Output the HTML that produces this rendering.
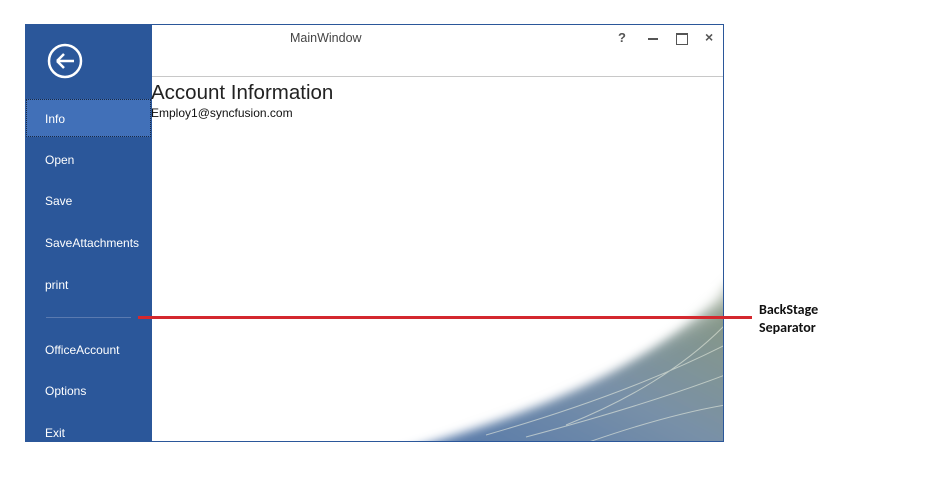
<!DOCTYPE html>
<html><head><style>
body{margin:0;width:937px;height:486px;background:#fff;position:relative;overflow:hidden;font-family:"Segoe UI","Liberation Sans",sans-serif;}
.win{position:absolute;left:25px;top:24px;width:699px;height:418px;border:1px solid #2b579a;box-sizing:border-box;background:#fff;overflow:hidden}
.side{position:absolute;left:0;top:0;width:126px;height:418px;background:#2b579a;color:#fff;font-size:12px}
.item{position:absolute;left:19px}
.info{position:absolute;left:0;top:74px;width:125px;height:38px;background:#4170b8;border:1px dotted #1a2a44;box-sizing:border-box}
</style></head><body>
<div class="win">
<svg style="position:absolute;left:0;top:0" width="699" height="418">
<defs><linearGradient id="g" x1="0" y1="1" x2="1" y2="0"><stop offset="0" stop-color="#4f74aa"/><stop offset="0.5" stop-color="#7890a8"/><stop offset="1" stop-color="#8c9a7c"/></linearGradient>
<filter id="b"><feGaussianBlur stdDeviation="5"/></filter><filter id="b2"><feGaussianBlur stdDeviation="10"/></filter></defs>
<path d="M360 430 C500 390 620 350 710 250 L710 430 Z" fill="url(#g)" filter="url(#b)"/>
<path d="M330 420 C480 370 610 320 700 260" stroke="#fff" stroke-width="22" fill="none" filter="url(#b2)"/>
<path d="M460 410 Q600 370 699 320 M500 412 Q620 380 699 350 M540 400 Q640 360 699 300 M560 418 Q640 390 699 380" stroke="#e8ece0" stroke-width="1" fill="none" opacity=".6"/>
</svg>
<div class="side">
<svg style="position:absolute;left:21px;top:18px" width="36" height="36"><circle cx="18" cy="18" r="16" fill="none" stroke="#fff" stroke-width="2.5"/><path d="M10 18H27M10 18L17 11M10 18L17 25" stroke="#fff" stroke-width="2.5" fill="none"/></svg>
<div class="info"></div>
<div class="item" style="top:87px">Info</div>
<div class="item" style="top:128px">Open</div>
<div class="item" style="top:169px">Save</div>
<div class="item" style="top:211px">SaveAttachments</div>
<div class="item" style="top:253px">print</div>
<div style="position:absolute;left:20px;top:292px;width:85px;height:1px;background:#5a7ab0"></div>
<div class="item" style="top:318px">OfficeAccount</div>
<div class="item" style="top:359px">Options</div>
<div class="item" style="top:401px">Exit</div>
</div>
<div style="position:absolute;left:264px;top:6px;font-size:12.5px;color:#444">MainWindow</div>
<div style="position:absolute;left:592px;top:5px;font-size:13px;color:#555;font-weight:bold">?</div>
<div style="position:absolute;left:622px;top:13px;width:10px;height:2px;background:#555"></div>
<div style="position:absolute;left:650px;top:8px;width:10px;height:9px;border:1px solid #555;border-top-width:2px"></div>
<div style="position:absolute;left:679px;top:4px;font-size:14px;color:#555;font-weight:bold">×</div>
<div style="position:absolute;left:126px;top:51px;width:573px;height:1px;background:#c8c8c8"></div>
<div style="position:absolute;left:125px;top:56px;font-size:20.5px;color:#222">Account Information</div>
<div style="position:absolute;left:125px;top:81px;font-size:12px;color:#111">Employ1@syncfusion.com</div>
</div>
<div style="position:absolute;left:138px;top:316px;width:614px;height:3px;background:#d4282e"></div>
<div style="position:absolute;left:759px;top:301px;font-size:14px;font-weight:bold;line-height:18px;color:#111;font-family:Calibri,'Liberation Sans',sans-serif">BackStage<br>Separator</div>
</body></html>
